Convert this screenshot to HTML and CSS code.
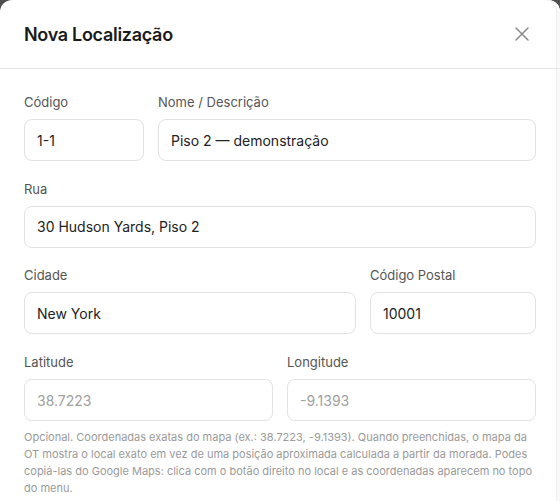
FILE: index.html
```html
<!DOCTYPE html>
<html lang="pt">
<head>
<meta charset="utf-8">
<link rel="stylesheet" href="styles.css">
</head>
<body>
<div class="modal">
  <div class="modal-header">
    <h2 class="title">Nova Localização</h2>
    <button class="close" aria-label="Fechar">
      <svg width="14" height="14" viewBox="0 0 14 14"><path d="M1 1L13 13M13 1L1 13" stroke="#8a8a8a" stroke-width="1.5" stroke-linecap="round" fill="none"/></svg>
    </button>
  </div>
  <div class="modal-body">
    <div class="row row-code">
      <div class="field"><label>Código</label><input class="input" value="1-1"></div>
      <div class="field"><label>Nome / Descrição</label><input class="input" value="Piso 2 — demonstração"></div>
    </div>
    <div class="row">
      <div class="field"><label>Rua</label><input class="input" value="30 Hudson Yards, Piso 2"></div>
    </div>
    <div class="row row-city">
      <div class="field"><label>Cidade</label><input class="input" value="New York"></div>
      <div class="field"><label>Código Postal</label><input class="input" value="10001"></div>
    </div>
    <div class="row row-coords">
      <div class="field"><label>Latitude</label><input class="input" placeholder="38.7223"></div>
      <div class="field"><label>Longitude</label><input class="input" placeholder="-9.1393"></div>
    </div>
    <p class="help">Opcional. Coordenadas exatas do mapa (ex.: 38.7223, -9.1393). Quando preenchidas, o mapa da OT mostra o local exato em vez de uma posição aproximada calculada a partir da morada. Podes copiá-las do Google Maps: clica com o botão direito no local e as coordenadas aparecem no topo do menu.</p>
  </div>
</div>
</body>
</html>
```

FILE: styles.css
```css
* { box-sizing: border-box; }
html, body { margin: 0; padding: 0; }
body {
  background: #4f4f4f;
  font-family: Inter, "Noto Sans", "Liberation Sans", sans-serif;
  width: 560px;
  height: 501px;
  overflow: hidden;
}
.modal {
  background: #fff;
  width: 560px;
  min-height: 501px;
  border-radius: 12px 12px 0 0;
  box-shadow: inset -3px 0 0 #f9f9f9, inset -4px 0 0 #ededed;
}
.modal-header {
  height: 69px;
  border-bottom: 1px solid #e6e6e6;
  display: flex;
  align-items: center;
  justify-content: space-between;
  padding: 0 24px 0 24px;
}
.title {
  margin: 0;
  font-size: 18px;
  font-weight: 600;
  color: #1a1a1a;
  letter-spacing: -0.3px;
}
.close {
  border: 0;
  background: none;
  padding: 0;
  width: 14px;
  height: 14px;
  display: flex;
  margin-right: 7px;
}
.modal-body {
  padding: 24px 24px 0 24px;
}
.row {
  display: grid;
  grid-template-columns: 1fr;
  gap: 14px;
  margin-bottom: 18.7px;
}
.row-code { grid-template-columns: 120px 1fr; }
.row-city { grid-template-columns: 2fr 1fr; }
.row-coords { grid-template-columns: 1fr 1fr; margin-bottom: 8px; }
.field { display: flex; flex-direction: column; }
label {
  font-size: 13px;
  line-height: 18px;
  color: #555;
  margin-bottom: 8px;
}
.input {
  height: 42px;
  border: 1px solid #e2e2e2;
  border-radius: 8px;
  padding: 0 12px;
  font-family: inherit;
  font-size: 14px;
  color: #222;
  width: 100%;
  outline: none;
  background: #fff;
}
.input::placeholder { color: #a0a0a0; }
.help {
  margin: 0;
  font-size: 11px;
  line-height: 17px;
  color: #9a9a9a;
}
```
